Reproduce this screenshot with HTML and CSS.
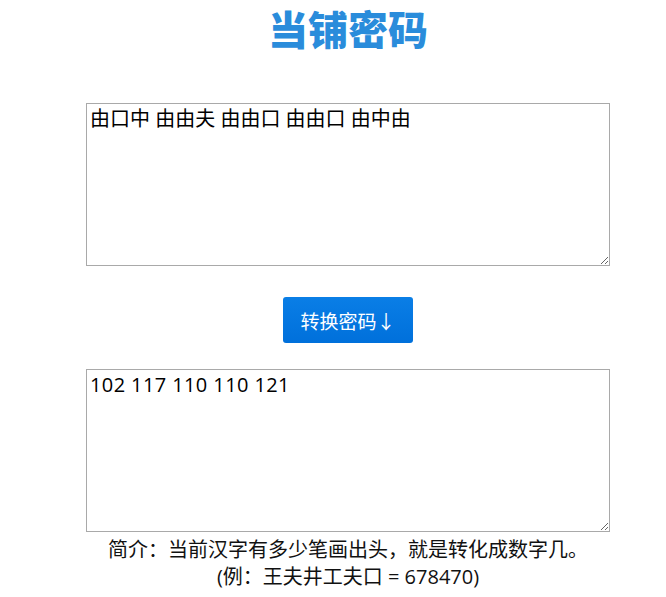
FILE: index.html
```html
<!DOCTYPE html>
<html lang="zh-CN">
<head>
  <meta charset="UTF-8" />
  <title>当铺密码</title>
  <link rel="stylesheet" href="styles.css">
</head>
<body>
  <div class="wrap">
    <h1>当铺密码</h1>
    <textarea id="src">由口中 由由夫 由由口 由由口 由中由</textarea>
    <div class="actions">
      <button onclick="convert()">转换密码↓</button>
    </div>
    <textarea id="out" class="result">102 117 110 110 121</textarea>
    <p class="note">简介：当前汉字有多少笔画出头，就是转化成数字几。<br>(例：王夫井工夫口 = 678470)</p>
  </div>
  <script>
    const heads = { "口": 0, "由": 1, "中": 2, "人": 3, "工": 4, "大": 5, "王": 6, "夫": 7, "井": 8, "羊": 9 };
    function convert() {
      const text = document.getElementById("src").value.trim();
      const words = text.split(/\s+/).map(w => {
        let n = "";
        for (const ch of w) n += heads[ch] !== undefined ? heads[ch] : "";
        return n;
      });
      document.getElementById("out").value = words.join(" ");
    }
  </script>
</body>
</html>
```

FILE: styles.css
```css
* { box-sizing: border-box; }
body {
  margin: 0;
  font-family: "Open Sans", "Noto Sans CJK SC", sans-serif;
  color: #111;
  background: #fff;
}
.wrap {
  width: 524px;
  margin-left: 86px;
}
h1 {
  margin: 0;
  height: 103px;
  text-align: center;
  font-family: "Noto Sans CJK SC", sans-serif;
  font-size: 40px;
  line-height: 56px;
  font-weight: 800;
  color: #2a8cdb;
}
textarea {
  display: block;
  width: 524px;
  height: 163px;
  margin: 0;
  padding: 2px 3px;
  border: 1px solid #a9a9a9;
  font-family: "Open Sans", "Noto Sans CJK SC", sans-serif;
  font-size: 20px;
  line-height: 26px;
  color: #000;
}
textarea.result {
  letter-spacing: 0.4px;
}
.actions {
  display: flex;
  justify-content: center;
  padding: 31px 0 26px;
}
button {
  width: 130px;
  height: 46px;
  border: none;
  border-radius: 3px;
  background: linear-gradient(to bottom, #0a7ee6, #0070db);
  color: #fff;
  font-family: "Noto Sans CJK SC", sans-serif;
  font-size: 19px;
  cursor: pointer;
}
.note {
  margin: 4px 0 0;
  text-align: center;
  font-size: 20px;
  line-height: 27px;
}
```
